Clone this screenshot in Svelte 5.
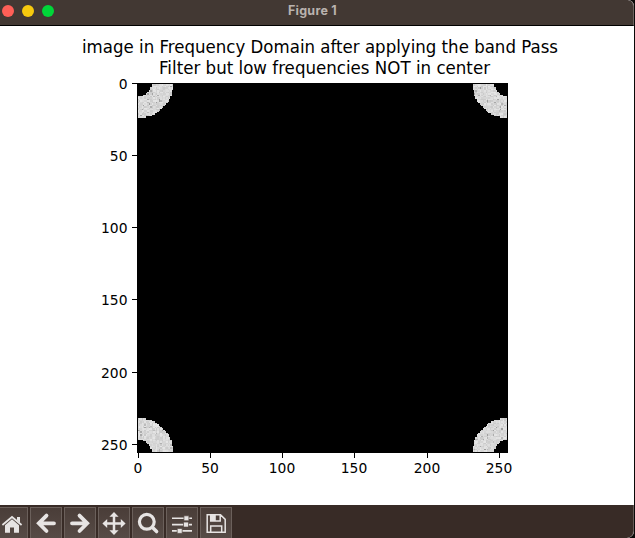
<script>
  const cell = 370 / 256;
  const ticks = [0, 50, 100, 150, 200, 250];

  // Band-pass ring, wrapped around the four corners of the spectrum.
  function ring() {
    const cells = [];
    let seed = 7321;
    for (let row = -25; row < 25; row++) {
      for (let col = -25; col < 25; col++) {
        const distance = Math.hypot(col, row < 0 ? row : row + 1);
        seed = (seed * 16807) % 2147483647;
        if (distance < 9.7 || distance >= 24.7) continue;
        const n = seed / 2147483647;
        const g = Math.round(n < 0.04 ? 155 + n * 900 : 200 + n * 30);
        cells.push({
          x: 137.2 + (col < 0 ? 256 + col : col) * cell,
          y: 83 + (row < 0 ? 256 + row : row) * cell,
          fill: `rgb(${g},${g},${g})`
        });
      }
    }
    return cells;
  }
  const cells = ring();
</script>

<div class="desktop">
  <main class="window">
    <header>
      <div class="lights"><i class="red"></i><i class="yellow"></i><i class="green"></i></div>
      <h1>Figure 1</h1>
    </header>

    <svg class="figure" width="634" height="479" viewBox="0 26 634 479">
      <g class="title">
        <text x="82" y="53" textLength="476" lengthAdjust="spacingAndGlyphs">image in Frequency Domain after applying the band Pass</text>
        <text x="159" y="74" textLength="331" lengthAdjust="spacingAndGlyphs">Filter but low frequencies NOT in center</text>
      </g>
      <rect x="137" y="83" width="371" height="370" fill="#000" />
      {#each cells as c}
        <rect x={c.x} y={c.y} width={cell + 0.04} height={cell + 0.04} fill={c.fill} shape-rendering="crispEdges" />
      {/each}
      <rect x="137.5" y="83.5" width="370" height="369" fill="none" stroke="#000" />
      <g class="ticks">
        {#each ticks as t}
          {@const x = Math.floor(138.1 + t * cell) + 0.5}
          {@const y = Math.floor(83.2 + t * cell) + 0.5}
          <path d="M{x} 453v5M132 {y}h5" stroke="#000" />
          <text x={x - 0.5} y="473" text-anchor="middle">{t}</text>
          <text x="127.5" y={y + 5.3} text-anchor="end">{t}</text>
        {/each}
      </g>
    </svg>

    <footer>
      <button class="first" aria-label="Home"><svg viewBox="0 0 24 24"><path fill="currentColor" d="M5 14.2 12 8.3l7 5.9v7.6h-5v-5.2h-4v5.2H5z"/><path fill="none" stroke="currentColor" stroke-width="1.8" d="m2.4 14 9.6-8 9.6 8"/><path fill="currentColor" d="M17 6h3v5.8l-3-2.5z"/></svg></button>
      <button aria-label="Back"><svg viewBox="0 0 24 24"><path fill="none" stroke="currentColor" stroke-width="3.8" stroke-linecap="round" d="M20 12.3H6M12.5 4.6l-7.7 7.7 7.7 7.7"/></svg></button>
      <button aria-label="Forward"><svg viewBox="0 0 24 24"><path fill="none" stroke="currentColor" stroke-width="3.8" stroke-linecap="round" d="M4 12.3h14M11.5 4.6l7.7 7.7-7.7 7.7"/></svg></button>
      <button aria-label="Pan"><svg viewBox="0 0 24 24"><path fill="none" stroke="currentColor" stroke-width="2.5" d="M12 4v17M3 12.5h18"/><path fill="currentColor" d="m12 .9 4.6 4.9H7.4zM12 24l4.6-4.8H7.4zM.4 12.5l4.8-4.6v9.2zM23.6 12.5l-4.8-4.6v9.2z"/></svg></button>
      <button aria-label="Zoom"><svg viewBox="0 0 24 24"><circle cx="10.8" cy="10.8" r="7.4" fill="none" stroke="currentColor" stroke-width="3.2"/><path stroke="currentColor" stroke-width="3.5" stroke-linecap="round" d="m16.8 16.8 3.8 3.8"/></svg></button>
      <button aria-label="Subplots"><svg viewBox="0 0 24 24"><path stroke="currentColor" stroke-width="1.6" d="M2 7.3h20M2 13.6h20M2 19.9h20"/><path fill="currentColor" stroke="#51453f" stroke-width=".7" d="M13.9 4.8h5v5h-5zM13.5 11.1h5v5h-5zM7.2 17.4h5v5h-5z"/></svg></button>
      <button aria-label="Save"><svg viewBox="0 0 24 24"><path fill="none" stroke="currentColor" stroke-width="1.5" d="M3.2 3.7h13.3l4.7 4.7v12.8H3.2zM6.7 21v-6h11v6M6.7 4v6h9.5V4"/><path fill="currentColor" d="M6.7 4h5.1v6H6.7z"/></svg></button>
    </footer>
  </main>
</div>

<style>
  :global(body) { margin: 0; background: #111; }
  .desktop { width: 635px; height: 538px; background: #090807; overflow: hidden; }
  .window {
    box-sizing: border-box; width: 634px; height: 538px;
    display: flex; flex-direction: column; overflow: hidden;
    border-radius: 0 6px 7px 0; background: #fff;
  }
  header {
    box-sizing: border-box; height: 26px; flex: none; display: grid;
    grid-template-columns: 56px 1fr 64px; background: #423833;
    border-bottom: 1px solid #000; border-right: 1px solid #6c6460;
    border-top-right-radius: 6px;
  }
  .lights { display: flex; gap: 8px; padding: 5px 0 0 2px; }
  .lights i { width: 12px; height: 12px; border-radius: 50%; flex: none; }
  .red { background: #ff5f57; }
  .yellow { background: #f6c90e; }
  .green { background: #00d639; }
  h1 {
    margin: 0; text-align: center; color: #b9b2ae;
    font: 700 12.5px/22px Inter, "Liberation Sans", sans-serif;
    letter-spacing: 0.25px;
  }
  .figure { display: block; flex: none; font-family: "DejaVu Sans", sans-serif; }
  .title text { font-size: 17.3px; }
  .ticks text { font-size: 13.89px; }
  footer {
    box-sizing: border-box; height: 33px; flex: none; display: flex; gap: 2px;
    padding-top: 2px; background: #382b26; border-right: 1px solid #655b57;
    border-bottom-right-radius: 7px; overflow: hidden;
  }
  button {
    box-sizing: border-box; width: 32px; height: 36px; flex: none; margin: 0;
    padding: 3px 3px 7px; border: 1px solid #6b605b; color: #e7e4e3;
    background: linear-gradient(#4a3d38, #584d48);
  }
  .first { margin-left: -4px; }
  button svg { display: block; width: 24px; height: 24px; }
</style>
